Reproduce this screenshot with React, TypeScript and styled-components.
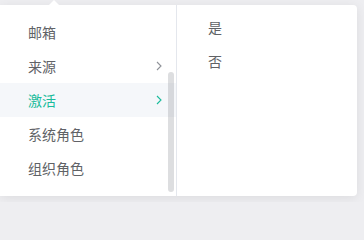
import styled, { createGlobalStyle } from "styled-components";

const GlobalStyle = createGlobalStyle`
  html, body {
    margin: 0;
    background: #eeeef1;
    font-family: "Noto Sans CJK SC", "Noto Sans", sans-serif;
  }
`;

type Option = { label: string; children?: boolean };

const mainOptions: Option[] = [
  { label: "邮箱" },
  { label: "来源", children: true },
  { label: "激活", children: true },
  { label: "系统角色" },
  { label: "组织角色" },
];

const subOptions: Option[] = [{ label: "是" }, { label: "否" }];

function Chevron() {
  return (
    <svg width="6" height="10" viewBox="0 0 6 10" fill="none">
      <path d="M1 1l4 4-4 4" stroke="currentColor" strokeWidth="1.1" />
    </svg>
  );
}

export default function App() {
  return (
    <>
      <GlobalStyle />
      <Stage>
        <Arrow />
        <Panel>
          <Menu $width={177} $top={10}>
            {mainOptions.map((o) => (
              <Item key={o.label} $active={o.label === "激活"} $indent={28}>
                <span>{o.label}</span>
                {o.children && (
                  <Caret $active={o.label === "激活"}>
                    <Chevron />
                  </Caret>
                )}
              </Item>
            ))}
            <Thumb />
          </Menu>
          <Menu $top={5}>
            {subOptions.map((o) => (
              <Item key={o.label} $indent={31}>
                <span>{o.label}</span>
              </Item>
            ))}
          </Menu>
        </Panel>
      </Stage>
    </>
  );
}

const Stage = styled.div`
  position: relative;
  width: 364px;
  height: 202px;
  padding-top: 5px;
  box-sizing: border-box;
  overflow: hidden;
`;

const Arrow = styled.div`
  position: absolute;
  left: 48px;
  top: 0;
  width: 0;
  height: 0;
  border-left: 6px solid transparent;
  border-right: 6px solid transparent;
  border-bottom: 6px solid #fff;
`;

const Panel = styled.div`
  display: flex;
  width: 357px;
  height: 191px;
  background: #fff;
  border-radius: 0 4px 4px 0;
  box-shadow: 0 2px 12px 0 rgba(0, 0, 0, 0.08);
  overflow: hidden;
`;

const Menu = styled.div<{ $width?: number; $top: number }>`
  position: relative;
  box-sizing: border-box;
  ${(p) => (p.$width ? `width: ${p.$width}px; border-right: 1px solid #e4e7ed;` : "flex: 1;")}
  padding-top: ${(p) => p.$top}px;
`;

const Item = styled.div<{ $active?: boolean; $indent: number }>`
  display: flex;
  align-items: center;
  justify-content: space-between;
  height: 34px;
  padding: 0 14px 0 ${(p) => p.$indent}px;
  font-size: 14px;
  color: ${(p) => (p.$active ? "#1abc9c" : "#606266")};
  background: ${(p) => (p.$active ? "#f5f7fa" : "transparent")};
`;

const Caret = styled.span<{ $active?: boolean }>`
  display: flex;
  color: ${(p) => (p.$active ? "#1abc9c" : "#909399")};
`;

const Thumb = styled.div`
  position: absolute;
  right: 2px;
  top: 67px;
  width: 6px;
  height: 120px;
  border-radius: 3px;
  background: rgba(144, 147, 153, 0.3);
`;
